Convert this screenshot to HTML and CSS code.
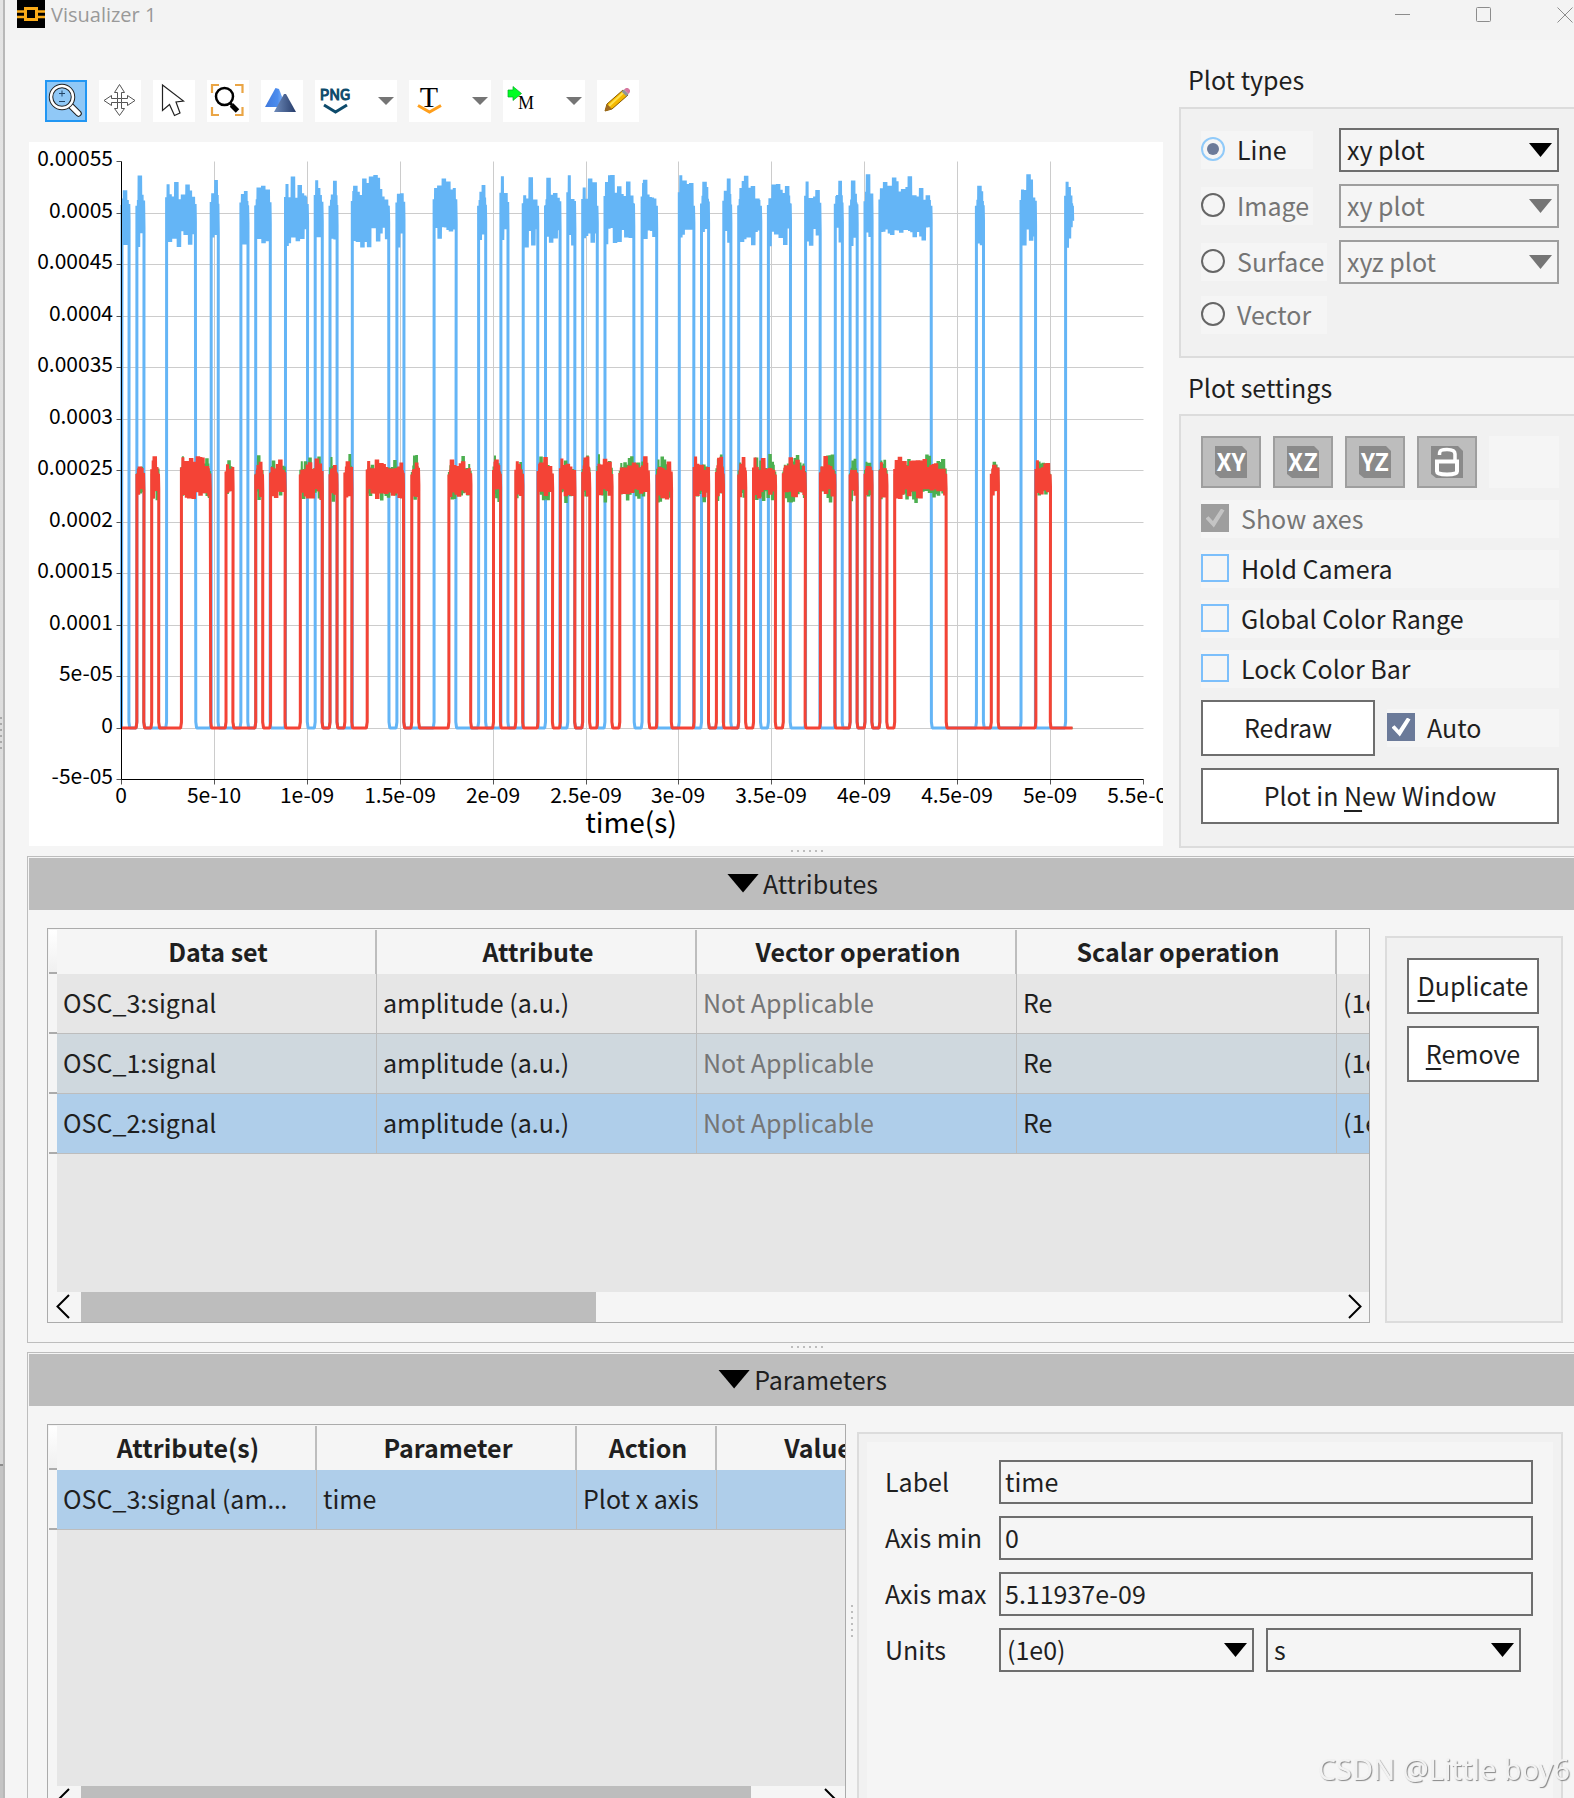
FILE: index.html
```html
<!DOCTYPE html>
<html lang="en">
<head>
<meta charset="utf-8">
<title>Visualizer 1</title>
<link rel="stylesheet" href="styles.css">
</head>
<body>
<div class="desktop-edge"><span class="edge-grip"></span></div>
<div class="window">
  <header class="titlebar">
    <svg class="app-logo" viewBox="0 0 28 28" aria-hidden="true">
      <rect width="28" height="28" fill="#000"/>
      <path d="M0 11.500H8M0 17H8M20 11.500H28M20 17H28" stroke="#fbab18" stroke-width="2.500"/>
      <rect x="8.500" y="8.500" width="11" height="11" fill="#000" stroke="#fbab18" stroke-width="3"/>
    </svg>
    <h1 class="title">Visualizer 1</h1>
    <div class="window-controls">
      <button type="button" aria-label="Minimize"><svg viewBox="0 0 16 16"><path d="M0 7.500H15"/></svg></button>
      <button type="button" aria-label="Maximize"><svg viewBox="0 0 16 16"><rect x=".5" y=".5" width="14" height="14" rx="1"/></svg></button>
      <button type="button" aria-label="Close"><svg viewBox="0 0 16 16"><path d="M.5 .5L15.500 15.500M15.500 .5L.5 15.500"/></svg></button>
    </div>
  </header>

  <main class="content">
    <div class="top">
      <section class="plot-area">
        <div class="toolbar">
          <button type="button" class="tool active" aria-label="Zoom">
            <svg viewBox="0 0 42 42"><path d="M24.500 24.500L33.500 33.500" stroke="#222" stroke-width="6.500" stroke-linecap="round"/><path d="M24.500 24.500L33.500 33.500" stroke="#fff" stroke-width="4.500" stroke-linecap="round"/><circle cx="17" cy="17" r="11" fill="#90c8f6" stroke="#222" stroke-width="4.500"/><circle cx="17" cy="17" r="11" fill="none" stroke="#fff" stroke-width="2.500"/><path d="M14 13.500H20M17 10.500V16.500M14 21.500H20" stroke="#246" stroke-width="1"/></svg>
          </button>
          <button type="button" class="tool" aria-label="Pan">
            <svg viewBox="0 0 42 42" fill="#fff" stroke="#555" stroke-width="1"><path d="M20.500 4.500L25.500 12.500H22.500V18.500H28.500V15.500L36 20.500L28.500 25.500V22.500H22.500V28.500H25.500L20.500 35.500L15.500 28.500H18.500V22.500H12.500V25.500L5 20.500L12.500 15.500V18.500H18.500V12.500H15.500Z"/><path d="M18.500 18.500H22.500V22.500H18.500Z"/></svg>
          </button>
          <button type="button" class="tool" aria-label="Select">
            <svg viewBox="0 0 42 42"><path d="M9.500 5L30.500 21L23 22L27 33L21.500 35.500L16.500 24.500L9.500 30.500Z" fill="#fff" stroke="#222" stroke-width="1.200"/></svg>
          </button>
          <button type="button" class="tool" aria-label="Zoom to fit">
            <svg viewBox="0 0 42 42" fill="none"><path d="M5 13V5H12M28 5H35.500V13M35.500 27V35H28M12 35H5V27" stroke="#eaa545" stroke-width="2.200"/><circle cx="17.500" cy="16.500" r="8.500" stroke="#000" stroke-width="2.500"/><path d="M23 23L25 25" stroke="#000" stroke-width="3"/><path d="M24.500 25L30.500 31" stroke="#000" stroke-width="5"/></svg>
          </button>
          <button type="button" class="tool" aria-label="Surface">
            <svg viewBox="0 0 42 42"><defs><linearGradient id="lt"><stop offset="0" stop-color="#3f78dc"/><stop offset=".6" stop-color="#4c8dee"/><stop offset="1" stop-color="#9cc4fa"/></linearGradient><linearGradient id="dk"><stop offset="0" stop-color="#6f8cbc"/><stop offset="1" stop-color="#263c6a"/></linearGradient></defs><path d="M14.500 8L4 27H25L18 9Z" fill="url(#lt)"/><path d="M23 14H25L35 32H13Z" fill="url(#dk)"/></svg>
          </button>
          <button type="button" class="tool wide" aria-label="Export PNG">
            <svg viewBox="0 0 82 42" fill="none"><text x="20" y="20" class="png-text">PNG</text><path d="M9 25L20.500 32L32 25" stroke="#0d4a6b" stroke-width="3"/><path d="M63 17H79L71 25Z" fill="#757575"/></svg>
          </button>
          <button type="button" class="tool wide" aria-label="Export text">
            <svg viewBox="0 0 82 42" fill="none"><text x="20" y="27" class="t-text">T</text><path d="M9 25.500L20.500 32L32 25.500" stroke="#ff9f1c" stroke-width="3"/><path d="M63 17H79L71 25Z" fill="#757575"/></svg>
          </button>
          <button type="button" class="tool wide" aria-label="Marker">
            <svg viewBox="0 0 82 42"><path d="M5 10H10V6.500L18.500 13.500L10 20.500V17H5Z" fill="#0f2" stroke="#0a2" stroke-width=".7"/><text x="23" y="29" class="m-text">M</text><path d="M63 17H79L71 25Z" fill="#757575"/></svg>
          </button>
          <button type="button" class="tool" aria-label="Edit">
            <svg viewBox="0 0 42 42"><path d="M8 31L10 24L26 10L31 15L15 29Z" fill="#f5b800" stroke="#8a5a00" stroke-width="1"/><path d="M12 26L27 12" stroke="#ffe14d" stroke-width="2"/><path d="M8 31L10 24L15 29Z" fill="#a06a20"/><path d="M24.500 11.500L27 9.500L31.500 14L29.500 16.500Z" fill="#8f9699"/><path d="M27 9.500L29 8H31L33 10V12L31.500 14Z" fill="#d678a0"/></svg>
          </button>
        </div>
        <svg class="chart" viewBox="0 0 1134 704" role="img" aria-label="Amplitude against time for three signals">
          <g id="grid"></g>
          <path id="series-blue" class="series blue"/>
          <path id="series-green" class="series green"/>
          <path id="series-red" class="series red"/>
          <g id="axes"></g>
          <text class="axis-title" x="602" y="691">time(s)</text>
        </svg>
      </section>

      <aside class="side">
        <h2 class="group-title">Plot types</h2>
        <div class="group types">
          <label class="option short"><input type="radio" name="ptype" checked>Line</label>
          <span class="select"><select aria-label="Line plot"><option>xy plot</option></select></span>
          <label class="option short off"><input type="radio" name="ptype" disabled>Image</label>
          <span class="select off"><select aria-label="Image plot" disabled><option>xy plot</option></select></span>
          <label class="option off"><input type="radio" name="ptype" disabled>Surface</label>
          <span class="select off"><select aria-label="Surface plot" disabled><option>xyz plot</option></select></span>
          <label class="option off"><input type="radio" name="ptype" disabled>Vector</label>
        </div>

        <h2 class="group-title second">Plot settings</h2>
        <div class="group settings">
          <div class="views">
            <button type="button" disabled aria-label="XY view"><svg viewBox="0 0 32 32"><path d="M0 0H27L32 5V32H5L0 28Z" fill="#8a8a8a"/><text x="16" y="25">XY</text></svg></button>
            <button type="button" disabled aria-label="XZ view"><svg viewBox="0 0 32 32"><path d="M0 0H27L32 5V32H5L0 28Z" fill="#8a8a8a"/><text x="16" y="25">XZ</text></svg></button>
            <button type="button" disabled aria-label="YZ view"><svg viewBox="0 0 32 32"><path d="M0 0H27L32 5V32H5L0 28Z" fill="#8a8a8a"/><text x="16" y="25">YZ</text></svg></button>
            <button type="button" disabled aria-label="Lock view"><svg viewBox="0 0 32 32"><path d="M0 0H27L32 5V32H5L0 28Z" fill="#8a8a8a"/><path d="M8.500 9V8C8.500 4 11 3.500 16 3.500C21 3.500 24 4.500 24 8V16" fill="none" stroke="#fff" stroke-width="3.500"/><path d="M6 15.500H26V25.500Q26 28.500 16 28.500Q6 28.500 6 25.500Z" fill="none" stroke="#fff" stroke-width="4"/></svg></button>
            <span class="filler"></span>
          </div>
          <label class="option off"><input type="checkbox" checked disabled>Show axes</label>
          <label class="option"><input type="checkbox">Hold Camera</label>
          <label class="option"><input type="checkbox">Global Color Range</label>
          <label class="option"><input type="checkbox">Lock Color Bar</label>
          <div class="redraw-row">
            <button type="button" class="btn">Redraw</button>
            <label class="option"><input type="checkbox" checked>Auto</label>
          </div>
          <button type="button" class="btn">Plot in <u>N</u>ew Window</button>
        </div>
      </aside>
    </div>

    <div class="splitter"></div>

    <section class="panel">
      <button type="button" class="panel-head"><span class="triangle"></span>Attributes</button>
      <div class="panel-body">
        <div class="frame attributes">
          <div class="viewport">
            <table>
              <colgroup><col class="c-stub"><col><col><col><col><col></colgroup>
              <thead><tr><th class="stub"></th><th>Data set</th><th>Attribute</th><th>Vector operation</th><th>Scalar operation</th><th></th></tr></thead>
              <tbody>
                <tr><td class="stub"></td><td>OSC_3:signal</td><td>amplitude (a.u.)</td><td class="na">Not Applicable</td><td>Re</td><td>(1e0)</td></tr>
                <tr class="alt"><td class="stub"></td><td>OSC_1:signal</td><td>amplitude (a.u.)</td><td class="na">Not Applicable</td><td>Re</td><td>(1e0)</td></tr>
                <tr class="selected"><td class="stub"></td><td>OSC_2:signal</td><td>amplitude (a.u.)</td><td class="na">Not Applicable</td><td>Re</td><td>(1e0)</td></tr>
              </tbody>
            </table>
          </div>
          <div class="scrollbar">
            <button type="button" aria-label="Scroll left"><svg viewBox="0 0 32 30"><path d="M20 3L8.500 14.500L20 26"/></svg></button>
            <div class="track"><div class="thumb" style="width:41%"></div></div>
            <button type="button" aria-label="Scroll right"><svg viewBox="0 0 32 30"><path d="M12 3L23.500 14.500L12 26"/></svg></button>
          </div>
        </div>
        <div class="group actions">
          <button type="button" class="btn"><u>D</u>uplicate</button>
          <button type="button" class="btn"><u>R</u>emove</button>
        </div>
      </div>
    </section>

    <div class="splitter low"></div>

    <section class="panel last">
      <button type="button" class="panel-head"><span class="triangle"></span>Parameters</button>
      <div class="panel-body">
        <div class="frame parameters">
          <div class="viewport">
            <table>
              <colgroup><col class="c-stub"><col class="c-attr"><col class="c-param"><col class="c-action"><col class="c-value"></colgroup>
              <thead><tr><th class="stub"></th><th>Attribute(s)</th><th>Parameter</th><th>Action</th><th>Value</th></tr></thead>
              <tbody>
                <tr class="selected"><td class="stub"></td><td>OSC_3:signal (am<span class="more">…</span></td><td>time</td><td>Plot x axis</td><td></td></tr>
              </tbody>
            </table>
          </div>
          <div class="scrollbar">
            <button type="button" aria-label="Scroll left"><svg viewBox="0 0 32 30"><path d="M20 3L8.500 14.500L20 26"/></svg></button>
            <div class="track"><div class="thumb" style="width:91.5%"></div></div>
            <button type="button" aria-label="Scroll right"><svg viewBox="0 0 32 30"><path d="M12 3L23.500 14.500L12 26"/></svg></button>
          </div>
        </div>
        <div class="v-splitter"></div>
        <div class="group form-box">
          <form class="form">
            <label for="f-label">Label</label><input id="f-label" type="text" value="time">
            <label for="f-min">Axis min</label><input id="f-min" type="text" value="0">
            <label for="f-max">Axis max</label><input id="f-max" type="text" value="5.11937e-09">
            <label for="f-scale">Units</label>
            <div class="units">
              <span class="select"><select id="f-scale"><option>(1e0)</option></select></span>
              <span class="select"><select aria-label="Unit"><option>s</option></select></span>
            </div>
          </form>
        </div>
      </div>
    </section>
  </main>
</div>
<p class="watermark">CSDN @Little boy6</p>
<script src="chart.js"></script>
</body>
</html>
```

FILE: styles.css
```css
* { box-sizing: border-box; }

body {
  margin: 0;
  height: 100vh;
  overflow: hidden;
  display: grid;
  grid-template-columns: 5px 1fr;
  background: #f5f5f5;
  color: #1f1f1f;
  font: 25px/36px "Noto Sans CJK SC", "Noto Sans", sans-serif;
}

button, input, select { font: inherit; color: inherit; margin: 0; border-radius: 0; }
h1, h2, p { margin: 0; font-weight: 400; }

/* strip of the window behind */
.desktop-edge {
  display: flex;
  align-items: center;
  border-right: 2px solid #b8b8b8;
  background: linear-gradient(#e4e4e4, #d6d6d6 1464px, #8c8c8c 1464px 1466px, #c4c4c4 1466px);
}
.edge-grip {
  width: 2px;
  height: 34px;
  margin-bottom: 330px;
  background: repeating-linear-gradient(#aaa 0 2px, transparent 2px 6px);
}

.window { min-width: 0; height: 100vh; display: flex; flex-direction: column; overflow: hidden; }

.titlebar { flex: none; height: 40px; display: flex; padding: 0 1px 0 12px; background: #f3f3f3; }
.app-logo { width: 28px; height: 28px; }
.title { margin-left: 6px; font: 20px/30px "Open Sans", sans-serif; color: #999; }
.window-controls { margin-left: auto; display: flex; align-items: flex-start; gap: 65px; padding-top: 7px; }
.window-controls button { border: 0; padding: 0; background: none; height: 16px; }
.window-controls svg { display: block; width: 16px; height: 16px; fill: none; stroke: #8c8c8c; stroke-width: 1; }

.content { flex: 1; min-height: 0; display: flex; flex-direction: column; padding-left: 22px; }

.top { flex: none; display: grid; grid-template-columns: 1fr 395px; gap: 16px; padding-left: 2px; }
.plot-area { min-width: 0; padding-top: 40px; }
.toolbar { display: flex; gap: 12px; padding-left: 16px; margin-bottom: 20px; }
.tool { width: 42px; height: 42px; padding: 0; border: 0; background: #fff; }
.tool.wide { width: 82px; }
.tool svg { display: block; width: 100%; height: 42px; }
.tool.active { background: #90c8f6; box-shadow: inset 0 0 0 2px #2196f3; }
.png-text { font: 15px "Noto Sans CJK SC", sans-serif; fill: #0d4a6b; stroke: #0d4a6b; stroke-width: 1; text-anchor: middle; }
.t-text { font: 30px "Liberation Serif", serif; fill: #000; text-anchor: middle; }
.m-text { font: 18px "Liberation Serif", serif; fill: #000; text-anchor: middle; }

.chart { display: block; width: 100%; background: #fff; overflow: hidden; font-size: 21px; }
.chart .grid-line { stroke: #ccc; stroke-width: 1; }
.chart .axis-line { stroke: #000; stroke-width: 1; fill: none; }
.chart .tick { stroke: #555; stroke-width: 1; }
.chart text { fill: #000; }
.y-label { text-anchor: end; }
.x-label, .chart .axis-title { text-anchor: middle; }
.axis-title { font-size: 28px; }
.series { fill: none; stroke-width: 3; stroke-linejoin: bevel; }
.series.blue { stroke: #64b5f6; }
.series.green { stroke: #4caf50; stroke-width: 2; }
.series.red { stroke: #f44336; }

.side { padding-top: 21px; }
.group-title { padding-left: 9px; margin-bottom: 10px; font-size: 25px; line-height: 36px; }
.group-title.second { margin: 11px 0 9px; }
.group { border: 2px solid #dcdcdc; background: #f1f1f1; }
.types, .settings { border-right: 0; padding: 20px 15px 22px 20px; }
.types { display: grid; grid-template-columns: 126px 1fr; gap: 12px; padding-top: 19px; align-items: center; }
.option { display: flex; align-items: center; gap: 12px; height: 38px; padding-bottom: 2px; background: #f5f5f5; }
.option.short { width: 112px; }
.off { color: #757575; }
.option input { appearance: none; flex: none; display: grid; place-items: center; }
.option input[type="radio"] { width: 24px; height: 24px; border: 2px solid #666; border-radius: 50%; }
.option input[type="radio"]:checked { border-color: #90caf9; }
.option input[type="radio"]:checked::after { content: ""; width: 12px; height: 12px; border-radius: 50%; background: #6b7a99; }
.option input[type="checkbox"] { width: 28px; height: 28px; border: 2px solid #7cbffb; }
.option input[type="checkbox"]:checked { border: 0; background: #6b7a99; color: #fff; }
.option input[type="checkbox"]:checked::after {
  content: "";
  width: 19px;
  height: 19px;
  background: currentColor;
  clip-path: polygon(0 53%, 16% 41%, 39% 66%, 82% 0, 100% 10%, 44% 100%);
}
.option input[type="checkbox"]:disabled { background: #9e9e9e; color: #c4c4c4; }

.select { position: relative; display: block; }
.select select {
  appearance: none;
  display: block;
  width: 100%;
  height: 44px;
  padding: 0 30px 2px 6px;
  border: 2px solid #6e6e6e;
  background: #f5f5f5;
  opacity: 1;
}
.select.off select { border-color: #9e9e9e; }
.select::after {
  content: "";
  position: absolute;
  right: 7px;
  top: 15px;
  width: 23px;
  height: 14px;
  background: #000;
  clip-path: polygon(0 0, 100% 0, 50% 100%);
  pointer-events: none;
}
.select.off::after { background: #757575; }

.settings { display: flex; flex-direction: column; gap: 12px; }
.views { display: flex; gap: 12px; height: 52px; }
.views button { display: grid; place-items: center; width: 60px; padding: 0; border: 2px solid #9e9e9e; background: #bdbdbd; }
.views svg { width: 32px; height: 32px; }
.views text { font: 700 24px "Noto Sans CJK SC", sans-serif; fill: #fff; text-anchor: middle; }
.filler { flex: 1; background: #f5f5f5; }
.btn { height: 56px; padding: 0 0 2px; border: 2px solid #6e6e6e; background: #fff; }
.btn u { text-underline-offset: 4px; text-decoration-thickness: 2px; }
.redraw-row { display: grid; grid-template-columns: 174px 1fr; gap: 12px; align-items: center; }

.splitter { flex: none; height: 8px; padding: 2px 0 0 12px; display: flex; justify-content: center; }
.splitter.low { height: 9px; padding-top: 3px; }
.splitter::before { content: ""; width: 32px; height: 2px; background: repeating-linear-gradient(90deg, #bdbdbd 0 2px, transparent 2px 6px); }

.panel { flex: none; border: 1px solid #bdbdbd; border-right: 0; padding: 1px 0 0 1px; }
.panel.last { border-bottom: 0; flex: 1; display: flex; flex-direction: column; }
.panel-head {
  display: flex;
  align-items: center;
  justify-content: center;
  gap: 4px;
  width: 100%;
  height: 52px;
  padding: 0 0 2px 2px;
  border: 0;
  background: #bdbdbd;
}
.triangle { width: 32px; height: 19px; background: #000; clip-path: polygon(0 0, 100% 0, 50% 100%); }
.panel-body { display: flex; padding: 18px 11px 19px 18px; }
.last .panel-body { padding-bottom: 0; }

.frame { flex: 1; min-width: 0; border: 1px solid #ababab; padding: 1px 0 0 1px; }
.viewport { overflow: hidden; background: linear-gradient(90deg, #f5f5f5 8px, #e6e6e6 8px); }
.attributes .viewport { height: 362px; }
.parameters .viewport { height: 360px; }
table { table-layout: fixed; border-spacing: 0; width: 1608px; }
.parameters table { width: 868px; }
.c-stub { width: 8px; }
.c-attr, .c-param { width: 260px; }
.c-action { width: 140px; }
.c-value { width: 200px; }
th { height: 44px; padding: 0 0 2px 4px; background: #f5f5f5; border-right: 2px solid #bdbdbd; font-weight: 700; }
td {
  height: 60px;
  padding: 0 6px 4px;
  border-right: 1px solid #bdbdbd;
  border-bottom: 1px solid #bdbdbd;
  overflow: hidden;
  white-space: nowrap;
}
.more { font-family: "Noto Sans", sans-serif; line-height: 30px; }
.stub { padding: 0; border-right: 0; border-bottom: 2px solid #ababab; background: #f5f5f5; }
th.stub { background: linear-gradient(#fff, #f0f0f0); }
.alt td:not(.stub) { background: #cfd8de; }
.selected td:not(.stub) { background: #afceea; }
.na { color: #757575; }

.scrollbar { display: flex; height: 30px; background: #f5f5f5; }
.scrollbar button { width: 32px; padding: 0; border: 0; background: none; }
.scrollbar svg { display: block; width: 32px; height: 30px; fill: none; stroke: #000; stroke-width: 2; }
.track { flex: 1; }
.thumb { height: 100%; background: #bdbdbd; }

.actions { width: 178px; margin: 8px 0 0 15px; padding: 20px 22px 20px 20px; display: flex; flex-direction: column; gap: 12px; }

.v-splitter { width: 11px; display: flex; align-items: center; justify-content: center; }
.v-splitter::before { content: ""; width: 2px; height: 32px; background: repeating-linear-gradient(#bdbdbd 0 2px, transparent 2px 6px); }
.form-box { width: 706px; margin-top: 8px; padding: 8px; }
.form { display: grid; grid-template-columns: 114px 1fr; row-gap: 12px; align-items: center; align-content: start; height: 100%; padding: 18px 20px 18px 18px; background: #f5f5f5; }
.form label { padding-bottom: 2px; }
.form input { width: 100%; height: 44px; padding: 0 4px 2px; border: 2px solid #6e6e6e; background: #f5f5f5; }
.units { display: grid; grid-template-columns: 1fr 1fr; gap: 12px; padding-right: 12px; }

.watermark {
  position: fixed;
  right: 4px;
  bottom: 8px;
  font: 29px/42px "Noto Sans", sans-serif;
  color: #f2f2f2;
  text-shadow: 1px 1px 1px #888;
}
```

FILE: chart.js
```js
(function () {
  var LEFT = 92.5, TOP = 19.5, BOTTOM = 637.5, RIGHT = 1114.5;
  var BIT = 7.43, ZERO = 586;
  var X_STEP = (RIGHT - LEFT) / 11, Y_STEP = (BOTTOM - TOP) / 12;

  // [start, end] of every high run, in bit periods
  var runs = [[0, 1], [2, 3], [6, 10], [12, 13], [16, 17], [18, 20], [22, 25], [26, 27], [28, 29],
    [31, 36], [37, 38], [42, 45], [48, 49], [51, 52], [54, 56], [57, 59], [60, 61], [62, 64],
    [65, 69], [70, 72], [75, 77], [78, 79], [81, 82], [83, 86], [87, 90], [92, 94], [96, 97],
    [98, 99], [100, 101], [102, 109], [115, 116], [121, 123], [127, 128]];

  function random(seed) {
    return function () {
      seed = (seed * 1664525 + 1013904223) % 4294967296;
      return seed / 4294967296;
    };
  }

  // A bit stream with a noisy high level and a flat low level
  function trace(delay, mean, up, down, spike, seed) {
    var rnd = random(seed), d = '', end = LEFT + 128 * BIT;
    d += 'M' + LEFT + ' ' + ZERO;
    runs.forEach(function (r) {
      var a = LEFT + 0.5 + (r[0] + delay) * BIT, b = LEFT + (r[1] + delay) * BIT;
      if (a >= end) return;
      if (r[0] + delay > 0) d += 'L' + (a - 0.8) + ' ' + ZERO + 'L' + a + ' ' + (ZERO - 6);
      d += 'L' + a.toFixed(1) + ' ' + (mean + 10);
      var top = 0, low = 0, n = 0;
      for (var x = a; x <= b; x += 0.75) {
        if (n++ % 3 === 0) {
          top = up + Math.pow(rnd(), 2) * spike;
          low = down + Math.pow(rnd(), 2) * spike * 0.8;
        }
        var edge = Math.min(x - a, b - x) < 1.5 ? 0.55 : 1;
        d += 'L' + x.toFixed(1) + ' ' + (mean - top * edge).toFixed(1);
        d += 'L' + (x + 0.35).toFixed(1) + ' ' + (mean + low * edge).toFixed(1);
      }
      if (r[1] < 128) d += 'L' + b.toFixed(1) + ' ' + (ZERO - 6) + 'L' + (b + 0.8).toFixed(1) + ' ' + ZERO;
    });
    if (delay) d += 'L' + end + ' ' + ZERO;
    return d;
  }

  document.getElementById('series-blue').setAttribute('d', trace(0, 71, 13, 14, 26, 7));
  document.getElementById('series-green').setAttribute('d', trace(2, 338, 11, 11, 15, 21));
  document.getElementById('series-red').setAttribute('d', trace(2, 338, 10, 9, 14, 93));

  var grid = '', axes = '', i, p;
  var yLabels = ['0.00055', '0.0005', '0.00045', '0.0004', '0.00035', '0.0003', '0.00025',
    '0.0002', '0.00015', '0.0001', '5e-05', '0', '-5e-05'];
  var xLabels = ['0', '5e-10', '1e-09', '1.5e-09', '2e-09', '2.5e-09', '3e-09', '3.5e-09',
    '4e-09', '4.5e-09', '5e-09', '5.5e-09'];
  for (i = 0; i < yLabels.length; i++) {
    p = Math.round(TOP + i * Y_STEP - 0.5) + 0.5;
    if (i > 0 && i < 12) grid += '<path class="grid-line" d="M' + LEFT + ' ' + p + 'H' + RIGHT + '"/>';
    axes += '<path class="tick" d="M' + (LEFT - 5) + ' ' + p + 'H' + LEFT + '"/>';
    axes += '<text class="y-label" x="84" y="' + (p + 4.5) + '">' + yLabels[i] + '</text>';
  }
  for (i = 0; i < xLabels.length; i++) {
    p = Math.round(LEFT + i * X_STEP - 0.5) + 0.5;
    if (i > 0 && i < 11) grid += '<path class="grid-line" d="M' + p + ' ' + TOP + 'V' + BOTTOM + '"/>';
    axes += '<path class="tick" d="M' + p + ' ' + BOTTOM + 'V' + (BOTTOM + 5) + '"/>';
    axes += '<text class="x-label" x="' + (p - 0.5) + '" y="661">' + xLabels[i] + '</text>';
  }
  axes += '<path class="axis-line" d="M' + LEFT + ' ' + TOP + 'V' + BOTTOM + 'H' + RIGHT + '"/>';
  document.getElementById('grid').innerHTML = grid;
  document.getElementById('axes').innerHTML = axes;
})();
```
